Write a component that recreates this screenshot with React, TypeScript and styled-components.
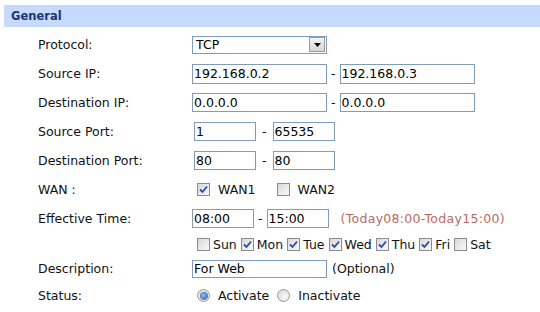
import styled, { createGlobalStyle } from "styled-components";

const GlobalStyle = createGlobalStyle`
    body {
        margin: 0;
        background: #fff;
        font-family: "DejaVu Sans", Verdana, sans-serif;
        font-size: 12.5px;
        color: #111;
    }
`

const days = [
    {name: 'Sun', on: false},
    {name: 'Mon', on: true},
    {name: 'Tue', on: true},
    {name: 'Wed', on: true},
    {name: 'Thu', on: true},
    {name: 'Fri', on: true},
    {name: 'Sat', on: false},
]

const CheckBox = ({checked}: { checked: boolean }) => (
    <Box>
        {checked && (
            <svg width="9" height="9" viewBox="0 0 9 9">
                <path d="M1 4.5 L3.5 7 L8 1.5" fill="none" stroke="#2a4aa8" strokeWidth="1.8"/>
            </svg>
        )}
    </Box>
)

const Radio = ({checked}: { checked: boolean }) => (
    <Circle>{checked && <Dot/>}</Circle>
)

export default function App() {
    return (
        <Page>
            <GlobalStyle/>
            <SectionHeader>General</SectionHeader>
            <Form>
                <Row>
                    <Label>Protocol:</Label>
                    <Field>
                        <Select>
                            <span>TCP</span>
                            <DropButton>
                                <svg width="7" height="4" viewBox="0 0 7 4">
                                    <path d="M0 0 H7 L3.5 4 Z" fill="#000"/>
                                </svg>
                            </DropButton>
                        </Select>
                    </Field>
                </Row>
                <Row>
                    <Label>Source IP:</Label>
                    <Field>
                        <TextInput $w={135} $h={20} readOnly defaultValue="192.168.0.2"/>
                        <Dash $gap={4}>-</Dash>
                        <TextInput $w={135} $h={20} readOnly defaultValue="192.168.0.3"/>
                    </Field>
                </Row>
                <Row>
                    <Label>Destination IP:</Label>
                    <Field>
                        <TextInput $w={135} $h={19} readOnly defaultValue="0.0.0.0"/>
                        <Dash $gap={4}>-</Dash>
                        <TextInput $w={135} $h={19} readOnly defaultValue="0.0.0.0"/>
                    </Field>
                </Row>
                <Row>
                    <Label>Source Port:</Label>
                    <Field $indent={2}>
                        <TextInput $w={62} $h={19} readOnly defaultValue="1"/>
                        <Dash $gap={6}>-</Dash>
                        <TextInput $w={62} $h={19} readOnly defaultValue="65535"/>
                    </Field>
                </Row>
                <Row>
                    <Label>Destination Port:</Label>
                    <Field $indent={2}>
                        <TextInput $w={62} $h={19} readOnly defaultValue="80"/>
                        <Dash $gap={6}>-</Dash>
                        <TextInput $w={62} $h={19} readOnly defaultValue="80"/>
                    </Field>
                </Row>
                <Row>
                    <Label>WAN :</Label>
                    <Field $indent={5}>
                        <Option $gap={8} $after={21}><CheckBox checked/>WAN1</Option>
                        <Option $gap={8}><CheckBox checked={false}/>WAN2</Option>
                    </Field>
                </Row>
                <Row $top>
                    <Label $line>Effective Time:</Label>
                    <div>
                        <Field $line>
                            <TextInput $w={62} $h={19} readOnly defaultValue="08:00"/>
                            <Dash $gap={4}>-</Dash>
                            <TextInput $w={62} $h={19} readOnly defaultValue="15:00"/>
                            <Hint>(Today08:00-Today15:00)</Hint>
                        </Field>
                        <Field $indent={5} $small>
                            {days.map(d => (
                                <Option key={d.name} $gap={3} $after={4}>
                                    <CheckBox checked={d.on}/>{d.name}
                                </Option>
                            ))}
                        </Field>
                    </div>
                </Row>
                <Row $h={25}>
                    <Label>Description:</Label>
                    <Field>
                        <TextInput $w={135} $h={18} readOnly defaultValue="For Web"/>
                        <Note>(Optional)</Note>
                    </Field>
                </Row>
                <Row>
                    <Label>Status:</Label>
                    <Field $indent={5}>
                        <Option $gap={8} $after={8}><Radio checked/>Activate</Option>
                        <Option $gap={8}><Radio checked={false}/>Inactivate</Option>
                    </Field>
                </Row>
            </Form>
        </Page>
    )
}

const Page = styled.div`
    padding: 5px 0 0 4px;
`

const SectionHeader = styled.div`
    height: 22px;
    display: flex;
    align-items: center;
    padding-left: 7px;
    background: #c6daff;
    color: #1f3670;
    font-weight: 700;
    font-size: 11.5px;
`

const Form = styled.div`
    padding-top: 3px;
`

const Row = styled.div<{ $h?: number; $top?: boolean }>`
    display: grid;
    grid-template-columns: 154px 1fr;
    align-items: ${p => p.$top ? 'start' : 'center'};
    height: ${p => p.$h ?? 29}px;
    padding-left: 34px;
    ${p => p.$top && 'height: auto;'}
`

const Label = styled.div<{ $line?: boolean }>`
    white-space: nowrap;
    ${p => p.$line && 'height: 29px; display: flex; align-items: center;'}
`

const Field = styled.div<{ $indent?: number; $line?: boolean; $small?: boolean }>`
    display: flex;
    align-items: center;
    white-space: nowrap;
    padding-left: ${p => p.$indent ?? 0}px;
    ${p => p.$line && 'height: 29px;'}
    ${p => p.$small && 'height: 23px;'}
`

const TextInput = styled.input<{ $w: number; $h: number }>`
    box-sizing: border-box;
    width: ${p => p.$w}px;
    height: ${p => p.$h}px;
    margin: 0;
    padding: 0 1px;
    border: 1px solid #7f9db9;
    font-family: inherit;
    font-size: 12.5px;
    color: #000;
    background: #fff;
    outline: none;
`

const Select = styled.div`
    box-sizing: border-box;
    width: 135px;
    height: 18px;
    border: 1px solid #7f9db9;
    display: flex;
    align-items: center;
    justify-content: space-between;
    padding: 0 1px 0 3px;
    color: #000;
`

const DropButton = styled.div`
    box-sizing: border-box;
    width: 16px;
    height: 15px;
    border: 1px solid #9a9a9a;
    background: linear-gradient(#f4f4f4, #d6d6d6);
    display: flex;
    align-items: center;
    justify-content: center;
`

const Dash = styled.span<{ $gap: number }>`
    margin: 0 ${p => p.$gap}px;
`

const Hint = styled.span`
    margin-left: 12px;
    color: #b86a5e;
    letter-spacing: 0.3px;
`

const Note = styled.span`
    margin-left: 5px;
`

const Option = styled.label<{ $gap: number; $after?: number }>`
    display: inline-flex;
    align-items: center;
    gap: ${p => p.$gap}px;
    margin-right: ${p => p.$after ?? 0}px;
`

const Box = styled.span`
    box-sizing: border-box;
    width: 13px;
    height: 13px;
    border: 1px solid #8c8c8c;
    background: linear-gradient(135deg, #d8d8d8, #fafafa);
    display: inline-flex;
    align-items: center;
    justify-content: center;
`

const Circle = styled.span`
    box-sizing: border-box;
    width: 13px;
    height: 13px;
    border-radius: 50%;
    border: 1px solid #9a9a9a;
    background: radial-gradient(circle at 65% 65%, #fafafa, #d4d4d4);
    display: inline-flex;
    align-items: center;
    justify-content: center;
`

const Dot = styled.span`
    width: 6px;
    height: 6px;
    border-radius: 50%;
    background: radial-gradient(circle at 40% 40%, #9cc4f0, #1c4f9c);
    box-shadow: 0 0 0 1px #4d7fc2;
`
